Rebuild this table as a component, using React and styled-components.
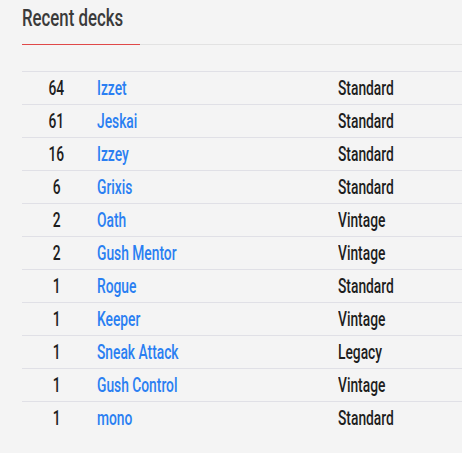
import React from "react";
import styled, { createGlobalStyle } from "styled-components";

const Global = createGlobalStyle`
  html, body { margin: 0; padding: 0; background: #f4f4f4; }
  body {
    font-family: Roboto, "Liberation Sans", sans-serif;
  }
`;

const Page = styled.div`
  padding: 0 0 19px 22px;
  background: #f4f4f4;
`;

const HeaderBar = styled.div`
  border-bottom: 1px solid #e2e2e2;
  display: flex;
`;

const Title = styled.h2`
  margin: 0 0 -1px 0;
  width: 118px;
  padding-top: 4px;
  height: 45px;
  box-sizing: border-box;
  border-bottom: 1px solid #e04848;
  font-size: 24px;
  font-weight: 500;
  white-space: nowrap;
  color: #3a3a3a;
  line-height: 28px;
`;

const Narrow = styled.span`
  display: inline-block;
  white-space: nowrap;
  transform: scaleX(${(p) => p.$scale || 0.69});
  transform-origin: ${(p) => p.$origin || "left"} center;
`;

const Table = styled.div`
  margin-top: 26px;
`;

const Row = styled.div`
  display: grid;
  grid-template-columns: 69px 241px 1fr;
  align-items: center;
  height: 33px;
  box-sizing: border-box;
  border-top: 1px solid #e0e0e6;
  font-size: 20px;
  font-weight: 500;
  line-height: 24px;
  color: #1e1e1e;
`;

const Count = styled.div`
  text-align: center;
`;

const Name = styled.a`
  padding-left: 6px;
  color: #2a7ff2;
  text-decoration: none;
`;

const Format = styled.div`
  padding-left: 6px;
`;

const decks = [
  [64, "Izzet", "Standard"],
  [61, "Jeskai", "Standard"],
  [16, "Izzey", "Standard"],
  [6, "Grixis", "Standard"],
  [2, "Oath", "Vintage"],
  [2, "Gush Mentor", "Vintage"],
  [1, "Rogue", "Standard"],
  [1, "Keeper", "Vintage"],
  [1, "Sneak Attack", "Legacy"],
  [1, "Gush Control", "Vintage"],
  [1, "mono", "Standard"],
];

export default function App() {
  return (
    <Page>
      <Global />
      <HeaderBar>
        <Title>
          <Narrow $scale={0.7}>Recent decks</Narrow>
        </Title>
      </HeaderBar>
      <Table>
        {decks.map(([n, name, fmt], i) => (
          <Row key={i}>
            <Count>
              <Narrow $origin="center">{n}</Narrow>
            </Count>
            <Name href="#">
              <Narrow>{name}</Narrow>
            </Name>
            <Format>
              <Narrow>{fmt}</Narrow>
            </Format>
          </Row>
        ))}
      </Table>
    </Page>
  );
}
